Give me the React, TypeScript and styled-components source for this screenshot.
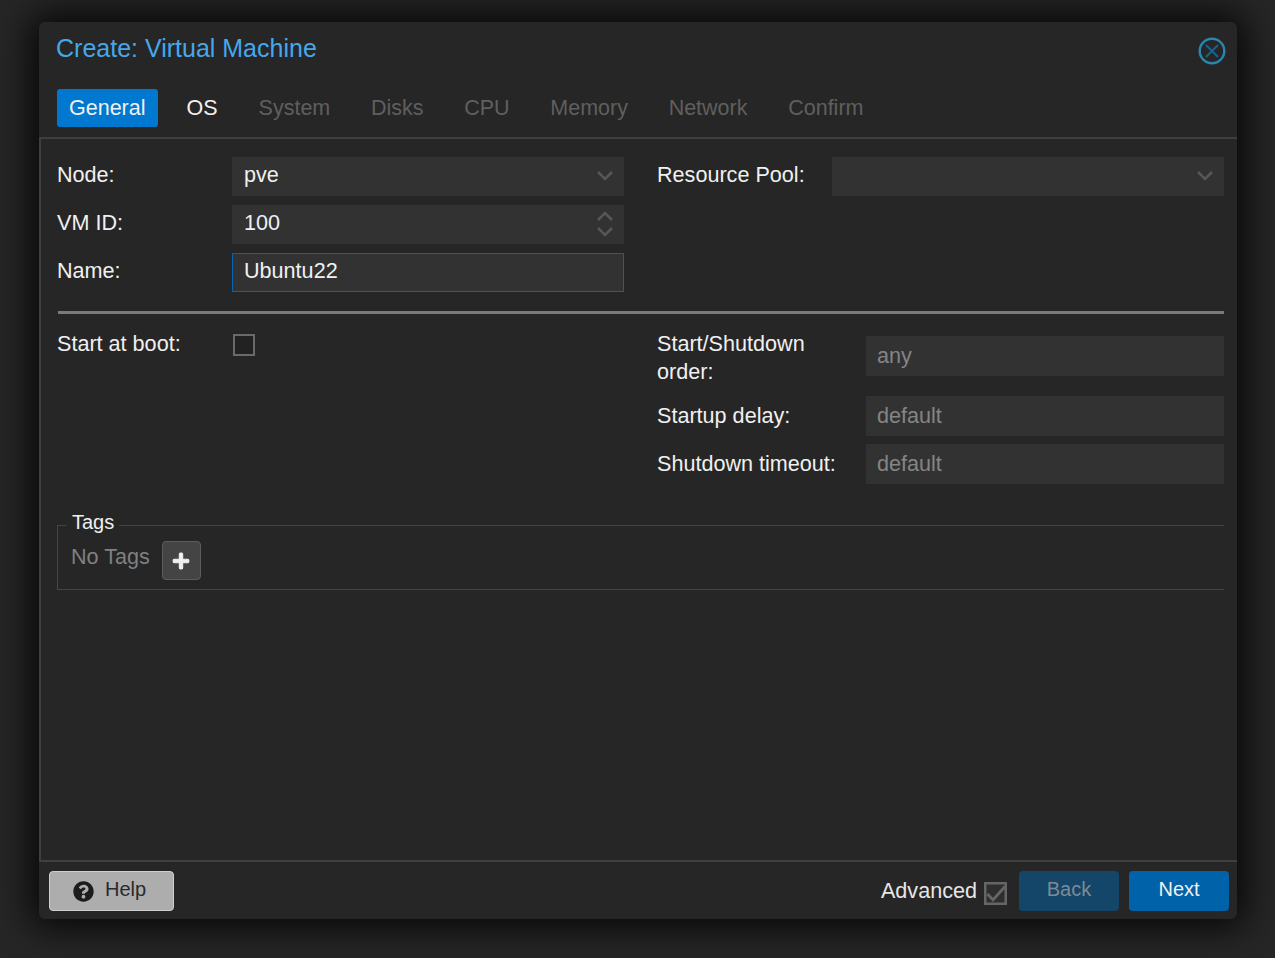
import React from 'react';
import styled, { createGlobalStyle } from 'styled-components';
import { FaPlus, FaQuestionCircle } from 'react-icons/fa';

const GlobalStyle = createGlobalStyle`
  html, body {
    margin: 0;
    padding: 0;
    background: #262626;
  }
  * {
    box-sizing: border-box;
  }
`;

const Page = styled.div`
  width: 1275px;
  height: 958px;
  padding: 22px 38px 39px 39px;
  background: #262626;
  font-family: 'Liberation Sans', Arial, sans-serif;
  overflow: hidden;
`;

const Dialog = styled.div`
  width: 1198px;
  height: 897px;
  display: flex;
  flex-direction: column;
  background: #262626;
  border-radius: 6px;
  box-shadow: 0 0 36px 8px rgba(0, 0, 0, 0.85);
`;

const Header = styled.header`
  height: 117px;
  flex: none;
  display: flex;
  flex-direction: column;
  border-bottom: 2px solid #3f3f3f;
`;

const TitleRow = styled.div`
  height: 67px;
  padding: 11px 10px 0 17px;
  display: flex;
  justify-content: space-between;
  align-items: flex-start;
`;

const Title = styled.h1`
  margin: 0;
  font-size: 25px;
  line-height: 30px;
  font-weight: 400;
  color: #45a8ec;
`;

const CloseButton = styled.svg`
  width: 30px;
  height: 30px;
  margin-top: 3px;
`;

const Tabs = styled.nav`
  padding-left: 18px;
  display: flex;
`;

const Tab = styled.div<{ $state: 'active' | 'enabled' | 'disabled' }>`
  height: 38px;
  padding: 0 12px;
  margin-right: ${(p) => (p.$state === 'disabled' ? '16.7px' : '17px')};
  display: flex;
  align-items: center;
  font-size: 21.5px;
  border-radius: 3px;
  background: ${(p) => (p.$state === 'active' ? '#0078cf' : 'transparent')};
  color: ${(p) => (p.$state === 'disabled' ? '#5f5f5f' : '#f0f0f0')};
`;

const Body = styled.main`
  flex: 1;
  padding: 18px 13px 0 16px;
  border-left: 2px solid #3f3f3f;
  display: flex;
  flex-direction: column;
`;

const Columns = styled.div`
  display: grid;
  grid-template-columns: 567px 567px;
  column-gap: 33px;
`;

const Column = styled.div`
  display: flex;
  flex-direction: column;
  gap: 9px;
`;

const Row = styled.div<{ $labelWidth?: number }>`
  display: grid;
  grid-template-columns: ${(p) => p.$labelWidth ?? 175}px 1fr;
  align-items: center;
`;

const TopAlignedRow = styled(Row)`
  align-items: start;
`;

const Label = styled.label`
  padding-bottom: 4px;
  font-size: 21.6px;
  line-height: 29px;
  color: #f0f0f0;
`;

const TallLabel = styled(Label)`
  padding-bottom: 2px;
`;

const BootLabel = styled(Label)`
  margin-top: -1px;
  padding-bottom: 0;
`;

const OrderLabel = styled(Label)`
  padding-bottom: 2px;
  line-height: 28px;
`;

const Field = styled.div<{ $focused?: boolean; $tall?: boolean }>`
  height: ${(p) => (p.$tall ? '40px' : '39px')};
  padding: 0 11px ${(p) => (p.$tall ? '0' : '4px')};
  display: flex;
  align-items: center;
  justify-content: space-between;
  background: #323232;
  font-size: 21.6px;
  color: #f0f0f0;
  border: 1px solid ${(p) => (p.$focused ? '#0067b5' : '#323232')};
`;

const OrderField = styled(Field)`
  margin-top: 6px;
`;

const Placeholder = styled.span`
  margin-left: -1px;
  color: #858585;
`;

const Trigger = styled.svg`
  width: 18px;
  height: 30px;
  margin: 3px -2px 0 0;
  flex: none;
`;

const Divider = styled.hr`
  height: 3px;
  margin: 19px 0 16px 1px;
  border: 0;
  background: #7a7a7a;
`;

const Checkbox = styled.div`
  width: 22px;
  height: 22px;
  margin: 4px 0 0 1px;
  background: #222;
  border: 2px solid #6a6a6a;
`;

const LowerRight = styled(Column)`
  gap: 8px;
`;

const TagsBox = styled.fieldset`
  margin: 26px 0 0;
  padding: 0 0 0 13px;
  min-width: 0;
  height: 80px;
  border: 0;
  border-top: 1px solid #454545;
  border-left: 1px solid #454545;
  border-bottom: 1px solid #454545;
`;

const TagsLegend = styled.legend`
  margin-left: -5px;
  padding: 0 5px 6px 6px;
  font-size: 20px;
  line-height: 24px;
  color: #f0f0f0;
`;

const TagsRow = styled.div`
  display: flex;
  align-items: flex-start;
  gap: 12px;
`;

const NoTags = styled.span`
  margin-top: 2px;
  font-size: 21.6px;
  line-height: 29px;
  color: #808080;
`;

const AddButton = styled.button`
  width: 39px;
  height: 39px;
  margin-top: 1px;
  padding: 0;
  display: flex;
  align-items: center;
  justify-content: center;
  background: #444;
  border: 1px solid #5c5c5c;
  border-radius: 4px;
  color: #f0f0f0;
  font-size: 18px;

  svg {
    stroke: currentColor;
    stroke-width: 30;
  }
`;

const Footer = styled.footer`
  height: 59px;
  flex: none;
  padding: 9px 8px 0 10px;
  border-top: 2px solid #3f3f3f;
  display: flex;
  align-items: flex-start;
  justify-content: space-between;
`;

const HelpButton = styled.button`
  width: 125px;
  height: 40px;
  padding: 0 0 3px 23px;
  display: flex;
  align-items: center;
  gap: 11px;
  background: #adadad;
  border: 1px solid #cfcfcf;
  border-radius: 4px;
  font-family: inherit;
  font-size: 20px;
  color: #2a2a2a;

  svg {
    font-size: 21px;
    color: #1c1c1c;
    margin-top: 3px;
  }
`;

const FooterRight = styled.div`
  display: flex;
  align-items: center;
`;

const AdvancedLabel = styled.span`
  margin: 0 7px 0 2px;
  font-size: 21.6px;
  color: #e6e6e6;
`;

const AdvancedCheck = styled.svg`
  width: 23px;
  height: 23px;
  margin: 4px 12px 0 0;
`;

const NavButton = styled.button<{ $disabled?: boolean }>`
  width: 100px;
  height: 40px;
  margin-right: ${(p) => (p.$disabled ? '10px' : '0')};
  padding: 0 0 3px;
  background: ${(p) => (p.$disabled ? '#134668' : '#0062a8')};
  border: 0;
  border-radius: 4px;
  font-family: inherit;
  font-size: 20px;
  color: ${(p) => (p.$disabled ? '#7f8b93' : '#f0f0f0')};
`;

const TABS = ['System', 'Disks', 'CPU', 'Memory', 'Network', 'Confirm'];

const Chevron = () => (
  <Trigger viewBox="0 0 18 30">
    <path d="M2 11 L9 18 L16 11" fill="none" stroke="#575757" strokeWidth="2.6" />
  </Trigger>
);

const Spinner = () => (
  <Trigger viewBox="0 0 18 30">
    <path d="M2 11 L9 4 L16 11 M2 19 L9 26 L16 19" fill="none" stroke="#575757" strokeWidth="2.6" />
  </Trigger>
);

export default function App() {
  return (
    <Page>
      <GlobalStyle />
      <Dialog>
        <Header>
          <TitleRow>
            <Title>Create: Virtual Machine</Title>
            <CloseButton viewBox="0 0 30 30">
              <circle cx="15" cy="15" r="12.3" fill="none" stroke="#2a86ad" strokeWidth="2.4" />
              <path d="M9 9 L21 21 M21 9 L9 21" stroke="#17628a" strokeWidth="2.2" />
            </CloseButton>
          </TitleRow>
          <Tabs>
            <Tab $state="active">General</Tab>
            <Tab $state="enabled">OS</Tab>
            {TABS.map((name) => (
              <Tab key={name} $state="disabled">
                {name}
              </Tab>
            ))}
          </Tabs>
        </Header>
        <Body>
          <Columns>
            <Column>
              <Row>
                <Label>Node:</Label>
                <Field>
                  pve
                  <Chevron />
                </Field>
              </Row>
              <Row>
                <Label>VM ID:</Label>
                <Field>
                  100
                  <Spinner />
                </Field>
              </Row>
              <Row>
                <Label>Name:</Label>
                <Field $focused>Ubuntu22</Field>
              </Row>
            </Column>
            <Column>
              <Row>
                <Label>Resource Pool:</Label>
                <Field>
                  <span />
                  <Chevron />
                </Field>
              </Row>
            </Column>
          </Columns>
          <Divider />
          <Columns>
            <Column>
              <TopAlignedRow>
                <BootLabel>Start at boot:</BootLabel>
                <Checkbox />
              </TopAlignedRow>
            </Column>
            <LowerRight>
              <TopAlignedRow $labelWidth={209}>
                <OrderLabel>
                  Start/Shutdown
                  <br />
                  order:
                </OrderLabel>
                <OrderField $tall>
                  <Placeholder>any</Placeholder>
                </OrderField>
              </TopAlignedRow>
              <Row $labelWidth={209}>
                <TallLabel>Startup delay:</TallLabel>
                <Field $tall>
                  <Placeholder>default</Placeholder>
                </Field>
              </Row>
              <Row $labelWidth={209}>
                <TallLabel>Shutdown timeout:</TallLabel>
                <Field $tall>
                  <Placeholder>default</Placeholder>
                </Field>
              </Row>
            </LowerRight>
          </Columns>
          <TagsBox>
            <TagsLegend>Tags</TagsLegend>
            <TagsRow>
              <NoTags>No Tags</NoTags>
              <AddButton>
                <FaPlus />
              </AddButton>
            </TagsRow>
          </TagsBox>
        </Body>
        <Footer>
          <HelpButton>
            <FaQuestionCircle />
            Help
          </HelpButton>
          <FooterRight>
            <AdvancedLabel>Advanced</AdvancedLabel>
            <AdvancedCheck viewBox="0 0 23 23">
              <rect x="1.25" y="1.25" width="20.5" height="20.5" fill="#2e2e2e" stroke="#666" strokeWidth="2.5" />
              <path d="M3.5 12 L9 18 L21 4.5" fill="none" stroke="#666" strokeWidth="2.8" />
            </AdvancedCheck>
            <NavButton $disabled>Back</NavButton>
            <NavButton>Next</NavButton>
          </FooterRight>
        </Footer>
      </Dialog>
    </Page>
  );
}
